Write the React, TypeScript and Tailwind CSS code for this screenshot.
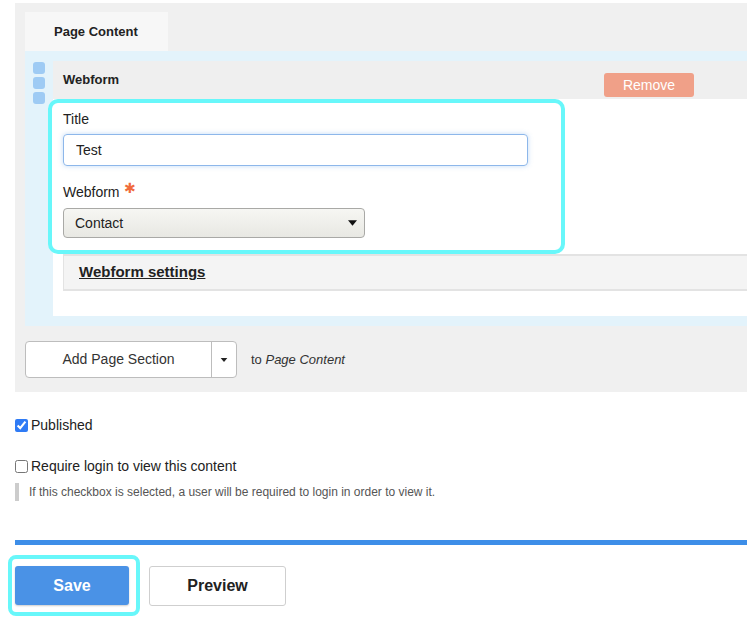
import { useState } from 'react';

const FONT = { fontFamily: '"Liberation Sans", Arial, sans-serif' };

function DragHandle() {
  return (
    <div className="flex flex-col gap-[3px] pt-[1px]">
      {[0, 1, 2].map((i) => (
        <span key={i} className="block w-[12px] h-[12px] rounded-[3px] bg-[#9ecbf4]" />
      ))}
    </div>
  );
}

function Caret({ className = '' }: { className?: string }) {
  return (
    <svg viewBox="0 0 10 6" className={className}>
      <path d="M0 0 L10 0 L5 6 Z" fill="currentColor" />
    </svg>
  );
}

export default function App() {
  const [title, setTitle] = useState('Test');
  const [published, setPublished] = useState(true);
  const [requireLogin, setRequireLogin] = useState(false);

  return (
    <div className="w-[747px] h-[640px] bg-white overflow-hidden text-[#222]" style={FONT}>
      <div className="pt-[3px]">
        {/* page content section */}
        <div className="ml-[15px] bg-[#f0f0f0] pl-[10px] pt-[9px] pb-[14px]">
          <div className="w-[143px] h-[39px] bg-[#f7f7f7] pl-[29px] flex items-center text-[13px] font-semibold text-[#222]">
            Page Content
          </div>

          <div className="bg-[#e3f3fb] pl-[8px] pt-[10px] pb-[10px] flex gap-[8px]">
            <DragHandle />
            <div className="flex-1 bg-white pb-[25px]">
              <div className="h-[38px] bg-[#efefef] pl-[10px] pr-[53px] flex items-center justify-between">
                <span className="text-[13px] font-bold text-[#222]">Webform</span>
                <button className="mt-[10px] w-[90px] h-[24px] rounded-[3px] bg-[#f0a088] text-white text-[14px]">
                  Remove
                </button>
              </div>

              {/* highlighted fields */}
              <div className="-ml-[5px] w-[517px] border-[4px] border-[#68f7fa] rounded-[10px] bg-white pl-[11px] pt-[6px] pb-[12px]">
                <label className="block text-[14px] leading-[20px] text-[#222]">Title</label>
                <input
                  value={title}
                  onChange={(e) => setTitle(e.target.value)}
                  className="mt-[5px] w-[465px] h-[32px] rounded-[4px] border border-[#8db7ea] px-[12px] text-[14px] text-[#222] outline-none shadow-[0_0_5px_rgba(80,150,230,0.35)]"
                />
                <div className="mt-[16px] flex items-start text-[14px] leading-[20px] text-[#222]">
                  Webform
                  <span className="ml-[4px] -mt-[3px] text-[#f06b3c] text-[14px] leading-[18px]">✱</span>
                </div>
                <div className="mt-[6px] w-[302px] h-[30px] rounded-[4px] border border-[#a9a9a6] bg-gradient-to-b from-[#f6f6f3] to-[#e8e8e3] pl-[11px] pr-[7px] flex items-center justify-between text-[14px] text-[#222]">
                  Contact
                  <Caret className="w-[9px] h-[6px] text-[#111]" />
                </div>
              </div>

              <div className="ml-[10px] h-[37px] bg-[#f4f4f4] border-y-2 border-l border-[#e3e3e3] pl-[15px] flex items-center">
                <span className="text-[15px] font-bold underline text-[#222]">Webform settings</span>
              </div>
            </div>
          </div>

          <div className="mt-[15px] flex items-center">
            <div className="flex h-[37px] w-[212px] rounded-[4px] border border-[#bdbdbd] bg-white">
              <button className="flex-1 text-[14px] text-[#333]">Add Page Section</button>
              <div className="w-[25px] border-l border-[#bdbdbd] flex items-center justify-center">
                <Caret className="w-[8px] h-[4px] text-[#222]" />
              </div>
            </div>
            <span className="ml-[14px] text-[13px] text-[#333]">
              to <em>Page Content</em>
            </span>
          </div>
        </div>

        {/* options */}
        <div className="ml-[15px] mt-[23px] text-[14px] text-[#222]">
          <label className="flex items-center gap-[3px]">
            <input
              type="checkbox"
              checked={published}
              onChange={(e) => setPublished(e.target.checked)}
              className="m-0 w-[13px] h-[13px] accent-[#2f7bf5]"
            />
            Published
          </label>
          <label className="mt-[20px] flex items-center gap-[3px]">
            <input
              type="checkbox"
              checked={requireLogin}
              onChange={(e) => setRequireLogin(e.target.checked)}
              className="m-0 w-[13px] h-[13px]"
            />
            Require login to view this content
          </label>
          <div className="mt-[6px] border-l-[4px] border-[#cccccc] pl-[10px] h-[18px] flex items-center text-[12px] text-[#555]">
            If this checkbox is selected, a user will be required to login in order to view it.
          </div>
        </div>

        <div className="ml-[15px] mt-[39px] h-[5px] bg-[#3d8ee8]" />

        <div className="mt-[10px] ml-[8px] flex items-center">
          <div className="pt-[7px] pb-[7px] pl-[3px] pr-[7px] border-[4px] border-[#68f7fa] rounded-[8px]">
            <button className="block w-[114px] h-[39px] rounded-[3px] bg-[#4a92e6] text-white text-[16px] font-bold shadow-[0_1px_2px_rgba(0,0,0,0.2)]">
              Save
            </button>
          </div>
          <button className="ml-[9px] w-[137px] h-[40px] rounded-[3px] border border-[#cfcfcf] bg-white text-[16px] font-bold text-[#222]">
            Preview
          </button>
        </div>
      </div>
    </div>
  );
}
